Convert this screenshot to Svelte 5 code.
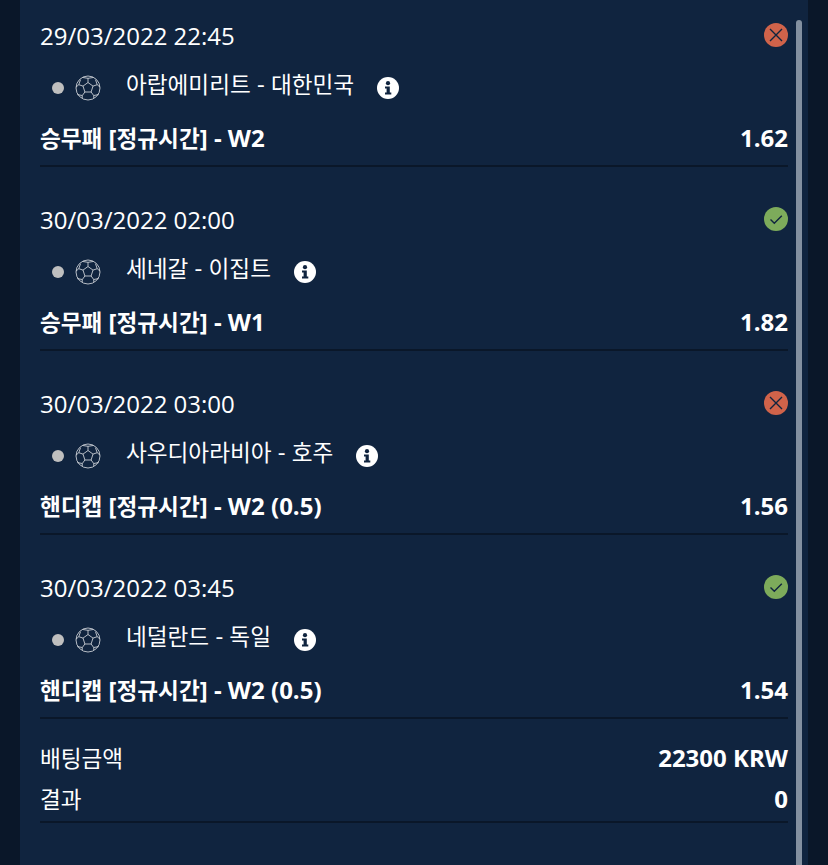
<script>
	const bets = [
		{ date: '29/03/2022 22:45', won: false, teams: '아랍에미리트 - 대한민국', market: '승무패 [정규시간] - W2', odds: '1.62' },
		{ date: '30/03/2022 02:00', won: true, teams: '세네갈 - 이집트', market: '승무패 [정규시간] - W1', odds: '1.82' },
		{ date: '30/03/2022 03:00', won: false, teams: '사우디아라비아 - 호주', market: '핸디캡 [정규시간] - W2 (0.5)', odds: '1.56' },
		{ date: '30/03/2022 03:45', won: true, teams: '네덜란드 - 독일', market: '핸디캡 [정규시간] - W2 (0.5)', odds: '1.54' }
	];

	// hangul runs are set a little smaller than the latin text
	const runs = (text) => text.split(/([가-힣]+(?: [가-힣]+)*)/).filter(Boolean);
	const isKo = (text) => /[가-힣]/.test(text);
</script>

{#snippet mixed(text)}
	{#each runs(text) as run}<span class:ko={isKo(run)}>{run}</span>{/each}
{/snippet}

<div class="page">
	<div class="panel">
		{#each bets as bet}
			<div class="bet">
				<div class="top">
					<span class="date">{bet.date}</span>
					{#if bet.won}
						<svg class="status" width="24" height="24" viewBox="0 0 24 24">
							<circle cx="12" cy="12" r="12" fill="#7dab5b" />
							<path d="M6.500 12.500l3.800 3.800 7.500-7.500" fill="none" stroke="#10243f" stroke-width="1.400" />
						</svg>
					{:else}
						<svg class="status" width="24" height="24" viewBox="0 0 24 24">
							<circle cx="12" cy="12" r="12" fill="#d0634a" />
							<path d="M6 6l12 12M18 6L6 18" fill="none" stroke="#10243f" stroke-width="1.400" />
						</svg>
					{/if}
				</div>
				<div class="match">
					<span class="dot"></span>
					<svg class="ball" width="26" height="26" viewBox="0 0 26 26" fill="none" stroke="#dfe2e6" stroke-width="0.800">
						<circle cx="13" cy="13" r="12" />
						<path d="M13 7.500l5 3.600-1.900 5.900H9.900L8 11.100z" />
						<path d="M13 7.500V3.300M18 11.100l4.200-1.400M16.100 17l2.600 3.500M9.900 17l-2.600 3.500M8 11.100L3.800 9.700" />
						<path d="M7.800 2.500L13 3.300l5.200-.8M22.200 9.700l2.700 2.300M22.200 9.700l-1.700-5M18.700 20.500l.1 2.500M18.700 20.500l5-.9M7.300 20.500l-.1 2.500M7.300 20.500l-5-.9M3.800 9.700L1.100 12M3.800 9.700l1.700-5" />
					</svg>
					<span class="teams">{@render mixed(bet.teams)}</span>
					<svg class="info" width="22" height="22" viewBox="0 0 22 22">
						<circle cx="11" cy="11" r="11" fill="#fff" />
						<circle cx="11" cy="6.200" r="2.100" fill="#10243f" />
						<path d="M8 9.400h4.800v6.200H14.300v2H8v-2h1.600v-4.200H8z" fill="#10243f" />
					</svg>
				</div>
				<div class="market">
					<span>{@render mixed(bet.market)}</span>
					<span>{bet.odds}</span>
				</div>
			</div>
		{/each}

		<div class="summary">
			<div class="row"><span class="label">{@render mixed('배팅금액')}</span><span class="value">22300 KRW</span></div>
			<div class="row"><span class="label">{@render mixed('결과')}</span><span class="value">0</span></div>
		</div>

		<div class="scrollbar"></div>
	</div>
</div>

<style>
	:global(body) {
		margin: 0;
		background: #0a1729;
	}

	.page {
		height: 865px;
		padding: 0 20px;
		box-sizing: border-box;
		overflow: hidden;
		font-family: 'Open Sans', 'Noto Sans CJK KR', sans-serif;
		color: #fff;
	}

	.panel {
		position: relative;
		height: 100%;
		padding: 0 20px;
		background: #10243f;
	}

	.ko {
		font-size: 22.6px;
	}

	.bet {
		height: 167px;
		box-sizing: border-box;
		padding-top: 20px;
		margin-bottom: 17px;
		border-bottom: 2px solid #0a1729;
	}

	.top {
		display: flex;
		justify-content: space-between;
		align-items: flex-start;
		height: 32px;
		font-size: 24px;
		line-height: 32px;
	}

	.status {
		margin-top: 3px;
	}

	.match {
		display: flex;
		align-items: center;
		height: 32px;
		margin-top: 20px;
		padding-left: 12px;
		font-size: 24px;
	}

	.dot {
		width: 12px;
		height: 12px;
		border-radius: 50%;
		background: #bfbfbf;
	}

	.ball {
		margin-left: 11px;
	}

	.teams {
		margin-left: 25px;
		line-height: 32px;
		position: relative;
		top: -4px;
	}

	.info {
		margin-left: 23px;
	}

	.market {
		display: flex;
		justify-content: space-between;
		margin-top: 18px;
		font-size: 24px;
		font-weight: 700;
		line-height: 32px;
	}

	.summary {
		height: 87px;
		box-sizing: border-box;
		padding-top: 1px;
		border-bottom: 2px solid #0a1729;
	}

	.row {
		display: flex;
		justify-content: space-between;
		height: 41px;
		font-size: 24px;
		line-height: 41px;
	}

	.value {
		font-weight: 700;
	}

	.scrollbar {
		position: absolute;
		top: 20px;
		bottom: 0;
		right: 6px;
		width: 6px;
		border-radius: 3px 3px 0 0;
		background: #8390a0;
	}
</style>
